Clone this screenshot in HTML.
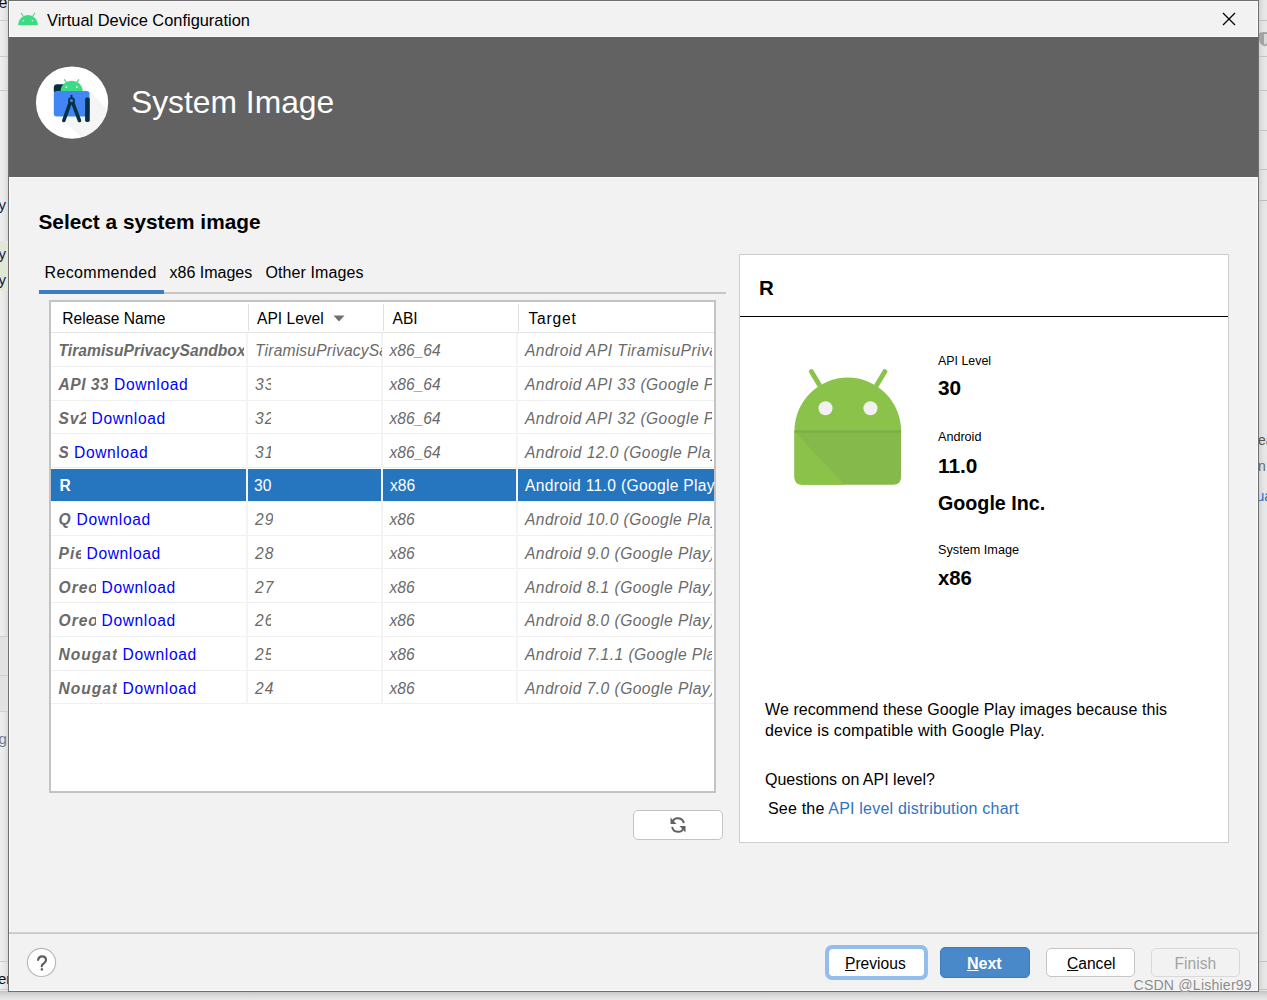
<!DOCTYPE html>
<html><head><meta charset="utf-8">
<style>
*{box-sizing:border-box;margin:0;padding:0}
html,body{width:1267px;height:1000px;overflow:hidden;background:#e6e6e6;font-family:"Liberation Sans",sans-serif;color:#000}
.a{position:absolute}
.t{position:absolute;white-space:nowrap;line-height:1;font-size:calc(var(--fs)*1px);top:calc(var(--b)*1px - var(--fs)*0.8465px)}
#bgL{left:0;top:0;width:8px;height:1000px;background:linear-gradient(90deg,#f0f0f0,#e6e6e6 60%,#d9d9d9);overflow:hidden}
#bgR{left:1259px;top:0;width:8px;height:1000px;background:linear-gradient(90deg,#d3d3d3,#e3e3e3 50%,#e9e9e9);overflow:hidden}
#win{left:8px;top:0;width:1251px;height:992px;border:1px solid #6f6f6f;background:#f2f2f2}
#title{left:9px;top:1px;width:1249px;height:36px;background:#f2f2f2}
#hdr{left:9px;top:37px;width:1249px;height:140px;background:#626262}
.hl{background:#fbfbfb}
.clip{position:absolute;overflow:hidden}
.bi{font-weight:bold;font-style:italic;color:#6a6a6a;letter-spacing:0.5px}
.it{font-style:italic;color:#6a6a6a}
.line{position:absolute;height:1px;background:#c9c9c9}
</style></head><body>
<div id="bgL" class="a">
  <div class="a" style="left:0;top:636px;width:8px;height:75px;background:#e2e2e2"></div>
  <div class="a" style="left:0;top:241px;width:8px;height:50px;background:#e1e8d8"></div>
  <div class="a" style="left:0;top:20px;width:8px;height:1px;background:#c9c9c9"></div>
  <div class="a" style="left:0;top:56px;width:8px;height:1px;background:#c9c9c9"></div>
  <div class="a" style="left:0;top:90px;width:8px;height:1px;background:#c9c9c9"></div>
  <div class="a" style="left:0;top:636px;width:8px;height:1px;background:#cfcfcf"></div>
  <div class="a" style="left:0;top:675px;width:8px;height:1px;background:#cfcfcf"></div>
  <div class="a" style="left:0;top:711px;width:8px;height:1px;background:#cfcfcf"></div>
  <div class="a" style="left:0;top:961px;width:8px;height:1px;background:#cbcbcb"></div>
  <div class="a" style="left:0;top:989px;width:8px;height:1px;background:#cbcbcb"></div>
  <div class="t" style="--fs:16;--b:9;left:-1.5px;color:#111">e</div>
  <div class="t" style="--fs:15;--b:209.5;left:-1.5px;color:#14204a">y</div>
  <div class="t" style="--fs:15;--b:259;left:-1.5px;color:#14204a">y</div>
  <div class="t" style="--fs:15;--b:284.5;left:-1.5px;color:#14204a">y</div>
  <div class="t" style="--fs:15;--b:744;left:-1.5px;color:#6f7c90">g</div>
  <div class="t" style="--fs:15;--b:983.5;left:-2px;color:#111">er</div>
</div>
<div id="bgR" class="a">
  <div class="a" style="left:0;top:20px;width:8px;height:1px;background:#c4c4c4"></div>
  <div class="a" style="left:0;top:56px;width:8px;height:1px;background:#c4c4c4"></div>
  <div class="a" style="left:0;top:90px;width:8px;height:1px;background:#c4c4c4"></div>
  <div class="a" style="left:0;top:130px;width:8px;height:1px;background:#c4c4c4"></div>
  <div class="a" style="left:0;top:169px;width:8px;height:1px;background:#c4c4c4"></div>
  <div class="a" style="left:0;top:200px;width:8px;height:1px;background:#bdbdbd"></div>
  <div class="a" style="left:0;top:961px;width:8px;height:1px;background:#c4c4c4"></div>
  <div class="a" style="left:0;top:989px;width:8px;height:1px;background:#c4c4c4"></div>
  <svg class="a" style="left:0;top:31px" width="10" height="16" viewBox="0 0 10 16"><path d="M0 2 Q5 0 10 2 V9 Q10 13 6 15.5 Q0 13 0 9 Z" fill="#a3a3a3"/><path d="M5 3 H10 V11 L6 13.5 H5 Z" fill="#d9d9d9"/></svg>
  <div class="t" style="--fs:14;--b:445;left:-1px;color:#555">ea</div>
  <div class="t" style="--fs:14;--b:471;left:-1px;color:#666">n</div>
  <div class="t" style="--fs:14;--b:500.5;left:-2.5px;color:#1f6fc9">ua</div>
</div>
<div id="shadow" class="a" style="left:0;top:991px;width:1267px;height:9px;background:linear-gradient(180deg,#c4c4c4,#dedede 60%,#e8e8e8)"></div>
<div id="win" class="a"></div>
<div id="title" class="a"></div>
<div id="hdr" class="a"></div>
<div class="a" style="left:9px;top:1px;width:1px;height:36px;background:#fcfcfc"></div>
<div class="a" style="left:9px;top:1px;width:1249px;height:1px;background:#fafafa"></div>
<div class="a" style="left:9px;top:36px;width:1249px;height:1px;background:#f9f9f9"></div>
<div class="a" style="left:9px;top:177px;width:1249px;height:1px;background:#fafafa"></div>
<div class="a" style="left:9px;top:177px;width:1px;height:814px;background:#fbfbfb"></div>
<div class="a" style="left:1257px;top:177px;width:1px;height:814px;background:#fbfbfb"></div>
<div class="a" style="left:1257px;top:1px;width:1px;height:36px;background:#fbfbfb"></div>
<div class="a" style="left:9px;top:990px;width:1249px;height:1px;background:#fbfbfb"></div>

<!-- title bar -->
<svg class="a" style="left:17px;top:12px" width="22" height="14" viewBox="0 0 22 14">
  <path d="M1 13.3 A10 10.3 0 0 1 21 13.3 Z" fill="#3ddc84"/>
  <line x1="4.3" y1="1.3" x2="6.2" y2="4.3" stroke="#3ddc84" stroke-width="1.1" stroke-linecap="round"/>
  <line x1="17.7" y1="1.3" x2="15.8" y2="4.3" stroke="#3ddc84" stroke-width="1.1" stroke-linecap="round"/>
  <circle cx="6.4" cy="8.7" r="0.75" fill="#f2f2f2"/>
  <circle cx="15.4" cy="8.7" r="0.75" fill="#f2f2f2"/>
</svg>
<div class="t" style="--fs:16.4;--b:26;left:47px;color:#000">Virtual Device Configuration</div>
<svg class="a" style="left:1222px;top:12px" width="14" height="14" viewBox="0 0 14 14">
  <path d="M1 1 L13 13 M13 1 L1 13" stroke="#000" stroke-width="1.3"/>
</svg>

<!-- header -->
<svg class="a" style="left:30px;top:60px" width="85" height="85" viewBox="0 0 1000 1000">
  <defs><clipPath id="cc"><circle cx="495" cy="500" r="425"/></clipPath></defs>
  <circle cx="495" cy="500" r="425" fill="#fff"/>
  <path d="M560 230 L1000 670 L1000 1000 L700 1000 L380 700 Z" fill="#ececec" clip-path="url(#cc)" opacity="0.55"/>
  <rect x="280" y="285" width="160" height="120" rx="40" fill="#073042"/>
  <path d="M405 232 L432 268 M573 232 L546 268" stroke="#3ddc84" stroke-width="14" stroke-linecap="round"/>
  <path d="M360 368 A130 125 0 0 1 620 368 Z" fill="#3ddc84"/>
  <circle cx="428" cy="320" r="10" fill="#fff"/>
  <circle cx="550" cy="320" r="10" fill="#fff"/>
  <rect x="280" y="365" width="420" height="300" rx="35" fill="#4285f4"/>
  <rect x="648" y="440" width="55" height="290" rx="20" fill="#073042"/>
  <path d="M488 410 V450" stroke="#073042" stroke-width="22"/>
  <circle cx="488" cy="478" r="30" fill="none" stroke="#073042" stroke-width="22"/>
  <path d="M470 510 L398 712 M506 510 L582 712" stroke="#073042" stroke-width="42" stroke-linecap="round"/>
</svg>
<div class="t" style="--fs:31.8;--b:114.3;left:131px;color:#fff">System Image</div>

<!-- content -->
<div class="t" style="--fs:20.8;--b:229.2;left:38.5px;font-weight:bold">Select a system image</div>
<div class="t" style="--fs:16;--b:278.9;left:44.5px;letter-spacing:0.35px">Recommended</div>
<div class="t" style="--fs:16;--b:278.9;left:169.5px">x86 Images</div>
<div class="t" style="--fs:16;--b:278.9;left:265.5px;letter-spacing:0.1px">Other Images</div>
<div class="a" style="left:39px;top:292px;width:687px;height:2px;background:#c6c6c6"></div>
<div class="a" style="left:39px;top:290px;width:125px;height:4px;background:#3d7dc7"></div>

<!-- table -->
<div class="a" style="left:49px;top:300px;width:667px;height:493px;border:2px solid #c3c3c3;background:#fff"></div>
<div class="a" style="left:51px;top:332px;width:663px;height:1px;background:#e4e4e4"></div>
<div class="a" style="left:248px;top:304px;width:1px;height:27px;background:#e0e0e0"></div>
<div class="a" style="left:383px;top:304px;width:1px;height:27px;background:#e0e0e0"></div>
<div class="a" style="left:518px;top:304px;width:1px;height:27px;background:#e0e0e0"></div>
<div class="t" style="--fs:15.6;--b:324.2;left:62.3px">Release Name</div>
<div class="t" style="--fs:15.6;--b:324;left:257px">API Level</div>
<svg class="a" style="left:333px;top:315px" width="12" height="7" viewBox="0 0 12 7"><path d="M0.5 0.5 H11.5 L6 6.5 Z" fill="#6e6e6e"/></svg>
<div class="t" style="--fs:15.6;--b:324;left:392.5px">ABI</div>
<div class="t" style="--fs:15.6;--b:324;left:528.5px;letter-spacing:0.8px">Target</div>
<div class="a" style="left:51px;top:365.75px;width:663px;height:1px;background:#f0f0f0"></div>
<div class="a" style="left:51px;top:399.50px;width:663px;height:1px;background:#f0f0f0"></div>
<div class="a" style="left:51px;top:433.25px;width:663px;height:1px;background:#f0f0f0"></div>
<div class="a" style="left:51px;top:467.00px;width:663px;height:1px;background:#f0f0f0"></div>
<div class="a" style="left:51px;top:500.75px;width:663px;height:1px;background:#f0f0f0"></div>
<div class="a" style="left:51px;top:534.50px;width:663px;height:1px;background:#f0f0f0"></div>
<div class="a" style="left:51px;top:568.25px;width:663px;height:1px;background:#f0f0f0"></div>
<div class="a" style="left:51px;top:602.00px;width:663px;height:1px;background:#f0f0f0"></div>
<div class="a" style="left:51px;top:635.75px;width:663px;height:1px;background:#f0f0f0"></div>
<div class="a" style="left:51px;top:669.50px;width:663px;height:1px;background:#f0f0f0"></div>
<div class="a" style="left:51px;top:703.25px;width:663px;height:1px;background:#f0f0f0"></div>
<div class="a" style="left:246px;top:333px;width:2px;height:371.25px;background:#f4f4f4"></div>
<div class="a" style="left:381px;top:333px;width:2px;height:371.25px;background:#f4f4f4"></div>
<div class="a" style="left:516px;top:333px;width:2px;height:371.25px;background:#f4f4f4"></div>
<div class="a" style="left:51px;top:469.00px;width:195px;height:31.75px;background:#2675bf"></div>
<div class="a" style="left:248px;top:469.00px;width:133px;height:31.75px;background:#2675bf"></div>
<div class="a" style="left:383px;top:469.00px;width:133px;height:31.75px;background:#2675bf"></div>
<div class="a" style="left:518px;top:469.00px;width:196px;height:31.75px;background:#2675bf"></div>
<div class="clip" style="left:52px;top:334.60px;width:192px;height:30px"><div class="t bi" style="--fs:15.6;--b:22;left:6.5px;letter-spacing:0.05px">TiramisuPrivacySandbox</div></div>
<div class="clip" style="left:248px;top:334.60px;width:133.5px;height:30px"><div class="t it" style="--fs:15.6;--b:22;left:7px;letter-spacing:0.2px">TiramisuPrivacySandbox</div></div>
<div class="t it" style="--fs:15.6;--b:356.60;left:389.5px;">x86_64</div>
<div class="clip" style="left:518px;top:334.60px;width:193.5px;height:30px"><div class="t it" style="--fs:15.6;--b:22;left:7px;letter-spacing:0.45px">Android API TiramisuPrivacySandbox (Google APIs)</div></div>
<div class="clip" style="left:52px;top:368.35px;width:56px;height:30px"><div class="t bi" style="--fs:15.6;--b:22;left:6.5px;letter-spacing:0.5px">API 33</div></div>
<div class="t" style="--fs:15.6;--b:390.35;left:114px;color:#0000ff;letter-spacing:0.62px">Download</div>
<div class="clip" style="left:248px;top:368.35px;width:23px;height:30px"><div class="t it" style="--fs:15.6;--b:22;left:7px;letter-spacing:1.0px">33</div></div>
<div class="t it" style="--fs:15.6;--b:390.35;left:389.5px;">x86_64</div>
<div class="clip" style="left:518px;top:368.35px;width:193.5px;height:30px"><div class="t it" style="--fs:15.6;--b:22;left:7px;letter-spacing:0.45px">Android API 33 (Google Play)</div></div>
<div class="clip" style="left:52px;top:402.10px;width:33.5px;height:30px"><div class="t bi" style="--fs:15.6;--b:22;left:6.5px;letter-spacing:0.8px">Sv2</div></div>
<div class="t" style="--fs:15.6;--b:424.10;left:91.5px;color:#0000ff;letter-spacing:0.62px">Download</div>
<div class="clip" style="left:248px;top:402.10px;width:23px;height:30px"><div class="t it" style="--fs:15.6;--b:22;left:7px;letter-spacing:1.0px">32</div></div>
<div class="t it" style="--fs:15.6;--b:424.10;left:389.5px;">x86_64</div>
<div class="clip" style="left:518px;top:402.10px;width:193.5px;height:30px"><div class="t it" style="--fs:15.6;--b:22;left:7px;letter-spacing:0.45px">Android API 32 (Google Play)</div></div>
<div class="clip" style="left:52px;top:435.85px;width:16px;height:30px"><div class="t bi" style="--fs:15.6;--b:22;left:6.5px;letter-spacing:0.5px">S</div></div>
<div class="t" style="--fs:15.6;--b:457.85;left:74px;color:#0000ff;letter-spacing:0.62px">Download</div>
<div class="clip" style="left:248px;top:435.85px;width:23px;height:30px"><div class="t it" style="--fs:15.6;--b:22;left:7px;letter-spacing:1.0px">31</div></div>
<div class="t it" style="--fs:15.6;--b:457.85;left:389.5px;">x86_64</div>
<div class="clip" style="left:518px;top:435.85px;width:193.5px;height:30px"><div class="t it" style="--fs:15.6;--b:22;left:7px;letter-spacing:0.45px">Android 12.0 (Google Play)</div></div>
<div class="t" style="--fs:15.6;--b:491.60;left:59.5px;color:#fff;font-weight:bold">R</div>
<div class="t" style="--fs:15.6;--b:491.60;left:254px;color:#fff">30</div>
<div class="t" style="--fs:15.6;--b:491.60;left:390px;color:#fff">x86</div>
<div class="clip" style="left:523px;top:469.60px;width:191.5px;height:30px"><div class="t" style="--fs:15.6;--b:22;left:2px;letter-spacing:0.33px;color:#fff">Android 11.0 (Google Play)</div></div>
<div class="clip" style="left:52px;top:503.35px;width:18.5px;height:30px"><div class="t bi" style="--fs:15.6;--b:22;left:6.5px;letter-spacing:1.0px">Q</div></div>
<div class="t" style="--fs:15.6;--b:525.35;left:76.5px;color:#0000ff;letter-spacing:0.62px">Download</div>
<div class="clip" style="left:248px;top:503.35px;width:24.5px;height:30px"><div class="t it" style="--fs:15.6;--b:22;left:7px;letter-spacing:1.0px">29</div></div>
<div class="t it" style="--fs:15.6;--b:525.35;left:389.5px;">x86</div>
<div class="clip" style="left:518px;top:503.35px;width:193.5px;height:30px"><div class="t it" style="--fs:15.6;--b:22;left:7px;letter-spacing:0.45px">Android 10.0 (Google Play)</div></div>
<div class="clip" style="left:52px;top:537.10px;width:28.5px;height:30px"><div class="t bi" style="--fs:15.6;--b:22;left:6.5px;letter-spacing:1.0px">Pie</div></div>
<div class="t" style="--fs:15.6;--b:559.10;left:86.5px;color:#0000ff;letter-spacing:0.62px">Download</div>
<div class="clip" style="left:248px;top:537.10px;width:25.5px;height:30px"><div class="t it" style="--fs:15.6;--b:22;left:7px;letter-spacing:1.0px">28</div></div>
<div class="t it" style="--fs:15.6;--b:559.10;left:389.5px;">x86</div>
<div class="clip" style="left:518px;top:537.10px;width:193.5px;height:30px"><div class="t it" style="--fs:15.6;--b:22;left:7px;letter-spacing:0.45px">Android 9.0 (Google Play)</div></div>
<div class="clip" style="left:52px;top:570.85px;width:43.5px;height:30px"><div class="t bi" style="--fs:15.6;--b:22;left:6.5px;letter-spacing:1.0px">Oreo</div></div>
<div class="t" style="--fs:15.6;--b:592.85;left:101.5px;color:#0000ff;letter-spacing:0.62px">Download</div>
<div class="clip" style="left:248px;top:570.85px;width:25.5px;height:30px"><div class="t it" style="--fs:15.6;--b:22;left:7px;letter-spacing:1.0px">27</div></div>
<div class="t it" style="--fs:15.6;--b:592.85;left:389.5px;">x86</div>
<div class="clip" style="left:518px;top:570.85px;width:193.5px;height:30px"><div class="t it" style="--fs:15.6;--b:22;left:7px;letter-spacing:0.45px">Android 8.1 (Google Play)</div></div>
<div class="clip" style="left:52px;top:604.60px;width:43.5px;height:30px"><div class="t bi" style="--fs:15.6;--b:22;left:6.5px;letter-spacing:1.0px">Oreo</div></div>
<div class="t" style="--fs:15.6;--b:626.60;left:101.5px;color:#0000ff;letter-spacing:0.62px">Download</div>
<div class="clip" style="left:248px;top:604.60px;width:23px;height:30px"><div class="t it" style="--fs:15.6;--b:22;left:7px;letter-spacing:1.0px">26</div></div>
<div class="t it" style="--fs:15.6;--b:626.60;left:389.5px;">x86</div>
<div class="clip" style="left:518px;top:604.60px;width:193.5px;height:30px"><div class="t it" style="--fs:15.6;--b:22;left:7px;letter-spacing:0.45px">Android 8.0 (Google Play)</div></div>
<div class="clip" style="left:52px;top:638.35px;width:64.5px;height:30px"><div class="t bi" style="--fs:15.6;--b:22;left:6.5px;letter-spacing:1.0px">Nougat</div></div>
<div class="t" style="--fs:15.6;--b:660.35;left:122.5px;color:#0000ff;letter-spacing:0.62px">Download</div>
<div class="clip" style="left:248px;top:638.35px;width:23px;height:30px"><div class="t it" style="--fs:15.6;--b:22;left:7px;letter-spacing:1.0px">25</div></div>
<div class="t it" style="--fs:15.6;--b:660.35;left:389.5px;">x86</div>
<div class="clip" style="left:518px;top:638.35px;width:193.5px;height:30px"><div class="t it" style="--fs:15.6;--b:22;left:7px;letter-spacing:0.45px">Android 7.1.1 (Google Play)</div></div>
<div class="clip" style="left:52px;top:672.10px;width:64.5px;height:30px"><div class="t bi" style="--fs:15.6;--b:22;left:6.5px;letter-spacing:1.0px">Nougat</div></div>
<div class="t" style="--fs:15.6;--b:694.10;left:122.5px;color:#0000ff;letter-spacing:0.62px">Download</div>
<div class="clip" style="left:248px;top:672.10px;width:25.5px;height:30px"><div class="t it" style="--fs:15.6;--b:22;left:7px;letter-spacing:1.0px">24</div></div>
<div class="t it" style="--fs:15.6;--b:694.10;left:389.5px;">x86</div>
<div class="clip" style="left:518px;top:672.10px;width:193.5px;height:30px"><div class="t it" style="--fs:15.6;--b:22;left:7px;letter-spacing:0.45px">Android 7.0 (Google Play)</div></div>


<!-- refresh -->
<div class="a" style="left:633px;top:810px;width:90px;height:30px;border:1px solid #c4c4c4;border-radius:5px;background:#fff"></div>
<svg class="a" style="left:669px;top:816px" width="18" height="18" viewBox="0 0 18 18">
  <path d="M3.2 6.2 A6 6 0 0 1 14.8 7.2" fill="none" stroke="#616161" stroke-width="2"/>
  <path d="M14.8 11.8 A6 6 0 0 1 3.2 10.8" fill="none" stroke="#616161" stroke-width="2"/>
  <path d="M1.5 1.5 L1.5 8 L7.5 8 Z" fill="#616161"/>
  <path d="M16.5 16.5 L16.5 10 L10.5 10 Z" fill="#616161"/>
</svg>

<!-- right panel -->
<div class="a" style="left:739px;top:254px;width:490px;height:589px;border:1px solid #cdcdcd;background:#fff"></div>
<div class="a" style="left:740px;top:316px;width:488px;height:1px;background:#000"></div>
<div class="t" style="--fs:20.5;--b:295.3;left:759px;font-weight:bold">R</div>
<svg class="a" style="left:785px;top:360px" width="125" height="135" viewBox="0 0 926 1000">
  <path d="M195 85 L255 185 M740 85 L680 185" stroke="#8bc34a" stroke-width="36" stroke-linecap="round"/>
  <path d="M70 525 A395 395 0 0 1 860 525 Z" fill="#8bc34a"/>
  <path d="M70 525 H860 V865 Q860 925 800 925 H130 Q70 925 70 865 Z" fill="#86b94b"/>
  <path d="M70 530 L440 925 H130 Q70 925 70 865 Z" fill="#8bc34a"/>
  <rect x="70" y="520" width="790" height="18" fill="#7cae42"/>
  <circle cx="300" cy="357" r="52" fill="#f1f1f1"/>
  <circle cx="633" cy="357" r="52" fill="#f1f1f1"/>
</svg>
<div class="t" style="--fs:12.4;--b:365.5;left:938px">API Level</div>
<div class="t" style="--fs:20.8;--b:395.4;left:938px;font-weight:bold">30</div>
<div class="t" style="--fs:12.6;--b:442;left:938px">Android</div>
<div class="t" style="--fs:20.8;--b:473.5;left:938px;font-weight:bold">11.0</div>
<div class="t" style="--fs:19.7;--b:510.2;left:938px;font-weight:bold">Google Inc.</div>
<div class="t" style="--fs:12.7;--b:554.4;left:938px">System Image</div>
<div class="t" style="--fs:20.3;--b:585;left:938px;font-weight:bold">x86</div>
<div class="t" style="--fs:16;--b:716;left:765px;letter-spacing:0.08px">We recommend these Google Play images because this</div>
<div class="t" style="--fs:16;--b:736.5;left:765px;letter-spacing:0.21px">device is compatible with Google Play.</div>
<div class="t" style="--fs:16;--b:785.6;left:765px">Questions on API level?</div>
<div class="t" style="--fs:16;--b:814.8;left:768px;letter-spacing:0.2px">See the <span style="color:#2f74c0">API level distribution chart</span></div>

<!-- footer -->
<div class="a" style="left:9px;top:932px;width:1249px;height:2px;background:#d2d2d2"></div><div class="a" style="left:9px;top:932.5px;width:1249px;height:1px;background:#c8c8c8"></div>
<svg class="a" style="left:26px;top:947px" width="31" height="31" viewBox="0 0 31 31"><circle cx="15.5" cy="15.4" r="14.1" fill="#fff" stroke="#b9b9b9" stroke-width="1.2"/></svg>
<svg class="a" style="left:33px;top:952px" width="18" height="22" viewBox="0 0 18 22">
  <path d="M5.1 7.9 C5.5 5.3 7 4.3 9 4.3 C11.5 4.3 13 5.9 13 8 C13 10.4 10.9 11.2 9.6 12.4 C8.9 13.1 8.8 13.6 8.8 14.3" fill="none" stroke="#5f5f5f" stroke-width="2.2" stroke-linecap="round"/>
  <rect x="7.7" y="16.2" width="2.4" height="2.4" rx="0.6" fill="#5f5f5f"/>
</svg>
<div class="a" style="left:825px;top:945px;width:103px;height:35px;border-radius:7px;background:#93bdec"></div>
<div class="a" style="left:829px;top:949px;width:95px;height:27px;border-radius:4px;background:#fff"></div>
<div class="t" style="--fs:15.6;--b:969.4;left:845px"><u>P</u>revious</div>
<div class="a" style="left:940px;top:947px;width:90px;height:31px;border-radius:5px;background:#4a89c9;border:1px solid #3f7bbd"></div>
<div class="t" style="--fs:16;--b:969.4;left:967px;color:#fff;font-weight:bold"><u>N</u>ext</div>
<div class="a" style="left:1046px;top:948px;width:89px;height:29px;border-radius:5px;background:#fff;border:1px solid #c6c6c6"></div>
<div class="t" style="--fs:15.6;--b:969.4;left:1067px"><u>C</u>ancel</div>
<div class="a" style="left:1151px;top:948px;width:89px;height:29px;border-radius:5px;background:#f2f2f2;border:1px solid #d9d9d9"></div>
<div class="t" style="--fs:15.6;--b:969.4;left:1174.5px;color:#a3a3a3">Finish</div>
<div class="t" style="--fs:14.1;--b:990.3;left:1133.5px;letter-spacing:0.2px;color:#8a8a8a;text-shadow:0 0 1px #fff,0 0 1px #fff">CSDN @Lishier99</div>
</body></html>
